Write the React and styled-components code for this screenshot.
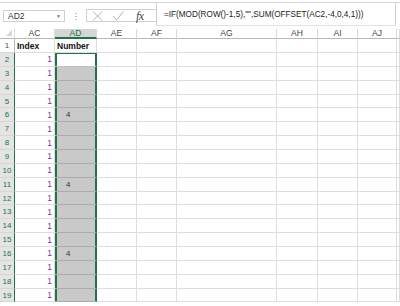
import React from 'react';
import styled, { createGlobalStyle } from 'styled-components';

const GlobalStyle = createGlobalStyle`
  html, body {
    margin: 0;
    padding: 0;
    background: #fff;
    overflow: hidden;
  }
  body {
    font-family: 'Liberation Sans', Arial, sans-serif;
  }
`;

const GREEN = '#217346';

const columns = [
  { key: 'AC', w: 40 },
  { key: 'AD', w: 42, active: true },
  { key: 'AE', w: 40 },
  { key: 'AF', w: 40 },
  { key: 'AG', w: 100 },
  { key: 'AH', w: 41 },
  { key: 'AI', w: 40 },
  { key: 'AJ', w: 39 },
];

const Window = styled.div`
  width: 400px;
  height: 306px;
  overflow: hidden;
  background: #fff;
`;

const TopBar = styled.div`
  margin-top: 2px;
  height: 26px;
  border-top: 1px solid #d6d6d6;
  display: flex;
  align-items: flex-start;
  padding-left: 3px;
  padding-right: 4px;
`;

const NameBox = styled.div`
  margin-top: 7px;
  width: 62px;
  height: 12px;
  box-sizing: border-box;
  border: 1px solid #d0d0d0;
  display: flex;
  align-items: center;
  justify-content: space-between;
  padding: 0 3px 0 4px;
  font-size: 8.5px;
  color: #333;
`;

const Arrow = styled.span`
  font-size: 5px;
  color: #777;
`;

const Dots = styled.div`
  width: 21px;
  margin-top: 10px;
  display: flex;
  justify-content: center;
`;

const FxBox = styled.div`
  margin-top: 6px;
  width: 70px;
  height: 13px;
  box-sizing: border-box;
  border: 1px solid #d0d0d0;
  border-right: none;
  display: flex;
  align-items: center;
  padding-left: 5px;
  gap: 9px;
`;

const Fx = styled.span`
  font-family: 'Liberation Serif', 'Times New Roman', serif;
  font-style: italic;
  font-size: 12px;
  line-height: 1;
  color: #444;
  margin-left: 3px;
  letter-spacing: -0.5px;
`;

const FormulaField = styled.div`
  flex: 1;
  height: 23px;
  box-sizing: border-box;
  border-left: 1px solid #d0d0d0;
  border-right: 1px solid #d0d0d0;
  border-bottom: 1px solid #e2e2e2;
  padding: 7px 0 0 7px;
  font-size: 8.2px;
  color: #222;
  white-space: nowrap;
`;

const Sheet = styled.div`
  display: grid;
  grid-template-columns: 15px ${columns.map((c) => `${c.w}px`).join(' ')} 1fr;
  grid-template-rows: 10px 14px repeat(18, 13.87px);
  font-size: 8.5px;
`;

const Corner = styled.div`
  box-sizing: border-box;
  border-right: 1px solid #dadada;
  border-bottom: 1px solid #b8b8b8;
  display: flex;
  align-items: flex-end;
  justify-content: flex-end;
  padding: 0 2px 2px 0;
`;

const ColHead = styled.div`
  box-sizing: border-box;
  background: ${(p) => (p.$active ? '#d6d6d6' : '#fff')};
  color: ${(p) => (p.$active ? GREEN : '#444')};
  border-right: 1px solid #dadada;
  border-bottom: ${(p) => (p.$active ? `2px solid ${GREEN}` : '1px solid #b8b8b8')};
  display: flex;
  align-items: center;
  justify-content: center;
  font-size: 8.5px;
  line-height: 1;
`;

const RowHead = styled.div`
  box-sizing: border-box;
  background: ${(p) => (p.$sel ? '#e4e4e4' : '#fff')};
  color: ${(p) => (p.$sel ? GREEN : '#3a4f63')};
  border-right: 1px solid ${(p) => (p.$sel ? GREEN : '#b8b8b8')};
  border-bottom: 1px solid #d6d6d6;
  display: flex;
  align-items: center;
  justify-content: center;
  font-size: 8px;
`;

const Cell = styled.div`
  box-sizing: border-box;
  border-right: 1px solid #dedede;
  border-bottom: 1px solid #dedede;
  display: flex;
  align-items: center;
  justify-content: ${(p) => (p.$right ? 'flex-end' : 'flex-start')};
  padding: ${(p) => (p.$right ? '0 2px 0 0' : '0 0 0 2px')};
  font-weight: ${(p) => (p.$bold ? 700 : 400)};
  color: ${(p) => p.$color || '#111'};
  white-space: nowrap;
  overflow: hidden;
`;

const SelCell = styled.div`
  box-sizing: border-box;
  background: ${(p) => (p.$first ? '#fff' : '#c9c9c9')};
  border-right: 1px solid ${GREEN};
  border-bottom: 1px solid ${(p) => (p.$first ? '#c0c0c0' : '#ababab')};
  box-shadow: inset 2px 0 0 ${GREEN}, inset -1px 0 0 ${GREEN}
    ${(p) => (p.$first ? `, inset 0 1px 0 ${GREEN}` : '')};
  display: flex;
  align-items: center;
  padding-left: 11px;
  color: #333;
  font-size: 8px;
`;

const rows = Array.from({ length: 19 }, (_, i) => {
  const n = i + 1;
  if (n === 1) return { n, ac: 'Index', ad: 'Number', header: true };
  return { n, ac: '1', ad: (n - 1) % 5 === 0 ? '4' : '' };
});

function XIcon() {
  return (
    <svg width="11" height="10" viewBox="0 0 11 10">
      <path d="M1 0.5 L10 9.5 M10 0.5 L1 9.5" stroke="#b4b4b4" strokeWidth="1" fill="none" />
    </svg>
  );
}

function CheckIcon() {
  return (
    <svg width="12" height="10" viewBox="0 0 12 10">
      <path d="M1 5 L4.5 9 L11.5 0.5" stroke="#b4b4b4" strokeWidth="1" fill="none" />
    </svg>
  );
}

function VDots() {
  return (
    <svg width="2" height="7" viewBox="0 0 2 7">
      <rect x="0.5" y="0" width="1" height="1" fill="#888" />
      <rect x="0.5" y="3" width="1" height="1" fill="#888" />
      <rect x="0.5" y="6" width="1" height="1" fill="#888" />
    </svg>
  );
}

function CornerMark() {
  return (
    <svg width="6" height="6" viewBox="0 0 6 6">
      <polygon points="6,0 6,6 0,6" fill="#d6d6d6" />
    </svg>
  );
}

export default function App() {
  return (
    <Window>
      <GlobalStyle />
      <TopBar>
        <NameBox>
          AD2
          <Arrow>▼</Arrow>
        </NameBox>
        <Dots>
          <VDots />
        </Dots>
        <FxBox>
          <XIcon />
          <CheckIcon />
          <Fx>fx</Fx>
        </FxBox>
        <FormulaField>=IF(MOD(ROW()-1,5),"",SUM(OFFSET(AC2,-4,0,4,1)))</FormulaField>
      </TopBar>
      <Sheet>
        <Corner>
          <CornerMark />
        </Corner>
        {columns.map((c) => (
          <ColHead key={c.key} $active={c.active}>
            {c.key}
          </ColHead>
        ))}
        <ColHead />
        {rows.map((r) => (
          <React.Fragment key={r.n}>
            <RowHead $sel={!r.header}>{r.n}</RowHead>
            <Cell $right={!r.header} $bold={r.header} $color={r.header ? '#111' : '#8a2f9a'}>
              {r.ac}
            </Cell>
            {r.header ? (
              <Cell $bold>{r.ad}</Cell>
            ) : (
              <SelCell $first={r.n === 2}>{r.ad}</SelCell>
            )}
            {columns.slice(2).map((c) => (
              <Cell key={c.key} />
            ))}
            <Cell />
          </React.Fragment>
        ))}
      </Sheet>
    </Window>
  );
}
